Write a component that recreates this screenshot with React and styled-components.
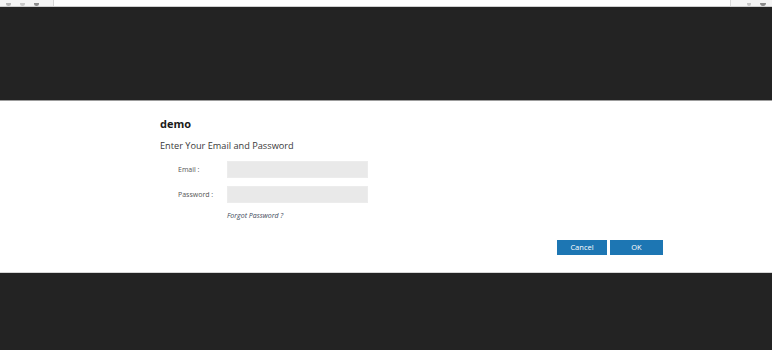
import React from "react";
import styled, { createGlobalStyle } from "styled-components";

const Global = createGlobalStyle`
  html, body { margin: 0; padding: 0; background: #232323; }
  body { font-family: "Open Sans", "Noto Sans", "Liberation Sans", sans-serif; }
  #root { width: 772px; height: 350px; overflow: hidden; }
`;

const Page = styled.div`
  display: flex;
  flex-direction: column;
  width: 772px;
  height: 350px;
`;

const Chrome = styled.div`
  height: 7px;
  flex: none;
  background: #f4f4f4;
  border-bottom: 1px solid #cfcfcf;
  display: flex;
  align-items: center;
  justify-content: space-between;
  padding: 0 6px;
  box-sizing: border-box;
  overflow: hidden;
`;

const NavIcons = styled.div`
  display: flex;
  gap: 9px;
  align-items: flex-end;
  height: 100%;
`;

const Dot = styled.span`
  width: ${(p) => p.$w || 5}px;
  height: 3px;
  background: ${(p) => p.$c || "#9a9a9a"};
  border-radius: 0 0 3px 3px;
  display: block;
`;

const UrlBar = styled.div`
  flex: 1;
  margin: 0 16px 0 14px;
  height: 100%;
  background: #ffffff;
  border-left: 1px solid #d8d8d8;
  border-right: 1px solid #d8d8d8;
`;

const DarkBand = styled.div`
  background: #232323;
  flex: ${(p) => (p.$grow ? "1" : "none")};
  height: ${(p) => (p.$h ? `${p.$h}px` : "auto")};
`;

const Dialog = styled.div`
  flex: none;
  height: 173px;
  background: #ffffff;
  border-top: 1px solid #9c9c9c;
  border-bottom: 1px solid #d6d6d6;
  box-sizing: border-box;
  padding: 16px 109px 0 160px;
  display: flex;
  flex-direction: column;
`;

const Title = styled.div`
  font-size: 11px;
  line-height: 14px;
  font-weight: 700;
  color: #1a1a1a;
`;

const Subtitle = styled.div`
  margin-top: 9px;
  font-size: 9.2px;
  line-height: 12px;
  color: #3a3a3a;
`;

const Form = styled.div`
  margin-top: 9px;
  display: flex;
  flex-direction: column;
  gap: 8px;
`;

const Row = styled.div`
  display: flex;
  align-items: center;
  padding-left: 18px;
`;

const Label = styled.label`
  width: 49px;
  font-size: 7px;
  color: #555555;
`;

const Input = styled.div`
  width: 141px;
  height: 17px;
  background: #e9e9e9;
  border: 1px solid #ececec;
  box-sizing: border-box;
`;

const Forgot = styled.a`
  margin-left: 49px;
  font-size: 7px;
  line-height: 10px;
  font-style: italic;
  color: #3d4a5a;
  text-decoration: none;
`;

const Buttons = styled.div`
  margin-top: 19px;
  display: flex;
  justify-content: flex-end;
  gap: 3px;
`;

const Button = styled.button`
  width: ${(p) => p.$w}px;
  height: 15px;
  padding: 0;
  border: none;
  background: #1d76b3;
  color: #ffffff;
  font-family: inherit;
  font-size: 7.5px;
  line-height: 15px;
  cursor: pointer;
`;

export default function App() {
  return (
    <>
      <Global />
      <Page>
        <Chrome>
          <NavIcons>
            <Dot $c="#b5b5b5" />
            <Dot $c="#c8c8c8" />
            <Dot $c="#8d8d8d" />
          </NavIcons>
          <UrlBar />
          <NavIcons>
            <Dot $c="#c4c4c4" $w={4} />
            <Dot $c="#8a8a8a" $w={6} />
          </NavIcons>
        </Chrome>
        <DarkBand $h={93} />
        <Dialog>
          <Title>demo</Title>
          <Subtitle>Enter Your Email and Password</Subtitle>
          <Form>
            <Row>
              <Label>Email :</Label>
              <Input />
            </Row>
            <Row>
              <Label>Password :</Label>
              <Input />
            </Row>
            <Row>
              <Forgot>Forgot Password ?</Forgot>
            </Row>
          </Form>
          <Buttons>
            <Button $w={50}>Cancel</Button>
            <Button $w={53}>OK</Button>
          </Buttons>
        </Dialog>
        <DarkBand $grow />
      </Page>
    </>
  );
}
